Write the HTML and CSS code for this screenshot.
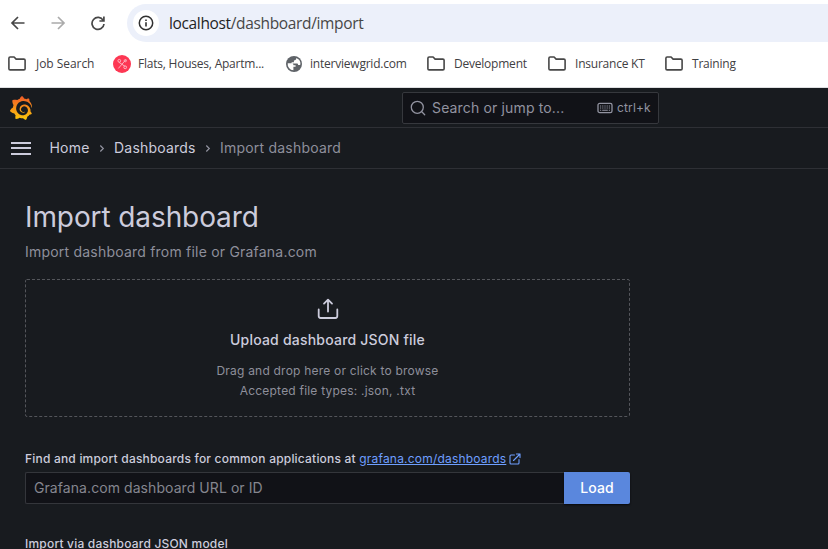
FILE: index.html
```html
<!DOCTYPE html>
<html lang="en">
<head>
<meta charset="utf-8">
<title>Import dashboard - Grafana</title>
<link rel="stylesheet" href="styles.css">
</head>
<body>
<svg class="defs" aria-hidden="true">
  <symbol id="folder" viewBox="0 0 20 16"><path d="M1.9 2.2Q1.9 1 3.1 1H7.1L9.1 3.1H16.9Q18.1 3.1 18.1 4.3V12.7Q18.1 13.9 16.9 13.9H3.1Q1.9 13.9 1.9 12.7Z" fill="none" stroke="#474747" stroke-width="1.6" stroke-linejoin="round"/></symbol>
</svg>
<header class="browser">
  <div class="toolbar">
    <svg class="nav" viewBox="0 0 16 16"><path d="M14.5 8H2M8 2L2 8l6 6" stroke="#474747"/></svg>
    <svg class="nav" viewBox="0 0 16 16"><path d="M1.5 8H14M8 2l6 6-6 6" stroke="#ababab"/></svg>
    <svg class="nav" viewBox="0 0 16 16"><path d="M13.2 5.4A6 6 0 1 0 14 9M13.9 1.6V6H9.4" stroke="#474747"/></svg>
    <div class="address">
      <span class="info"><svg width="16" height="16" viewBox="0 0 16 16"><circle cx="8" cy="8" r="6.7" fill="none" stroke="#303030" stroke-width="1.5"/><path d="M8 7.2v4.2M8 4.4v1.6" stroke="#303030" stroke-width="1.6"/></svg></span>
      <span class="url"><b>localhost</b>/dashboard/import</span>
    </div>
  </div>
  <nav class="bookmarks">
    <a class="bm job"><svg class="fold"><use href="#folder"/></svg><span>Job Search</span></a>
    <a class="bm flats"><svg width="18" height="18" viewBox="0 0 18 18"><circle cx="9" cy="9" r="9" fill="#fd3753"/><g fill="none" stroke="#ffb3bf" stroke-width="1"><path d="M12.9 4.6L5.4 13.4M5.8 7.2l6.6 4.4"/><circle cx="6.3" cy="5.8" r="1.4"/><circle cx="12.2" cy="12.3" r="1.4"/><circle cx="12.3" cy="5.7" r="1.1"/></g></svg><span>Flats, Houses, Apartm...</span></a>
    <a class="bm grid"><svg width="16" height="16" viewBox="0 0 16 16"><circle cx="8" cy="8" r="8" fill="#5f6368"/><path d="M1.7 7.2h3.4c1.6 0 2.4.9 2.4 2.1H9.6v1.5H7.4v3.5A6.3 6.3 0 0 1 1.7 7.2ZM10.3 1.9c.1 1.5-.8 2.4-2.4 2.5v1.8H5.6v1.3h5.2c1 0 1.3.7 1.3 1.6h2.1A6.3 6.3 0 0 0 10.3 1.9Z" fill="#fff"/></svg><span>interviewgrid.com</span></a>
    <a class="bm dev"><svg class="fold"><use href="#folder"/></svg><span>Development</span></a>
    <a class="bm ins"><svg class="fold"><use href="#folder"/></svg><span>Insurance KT</span></a>
    <a class="bm train"><svg class="fold"><use href="#folder"/></svg><span>Training</span></a>
  </nav>
</header>
<div class="topbar">
  <svg class="logo" viewBox="0 0 24 24"><defs><linearGradient id="lg" x1="0" y1="1" x2="0" y2="0"><stop offset="0" stop-color="#fcca0a"/><stop offset="1" stop-color="#f05a28"/></linearGradient></defs><path fill="url(#lg)" d="M23.02 10.59a8.578 8.578 0 0 0-.862-3.034 8.911 8.911 0 0 0-1.789-2.445c.337-1.342-.413-2.505-.413-2.505-1.292-.08-2.113.4-2.416.62-.052-.02-.102-.044-.154-.064-.22-.089-.446-.172-.677-.247-.231-.073-.47-.14-.711-.197a9.867 9.867 0 0 0-.875-.161C14.557.753 12.94 0 12.94 0c-1.804 1.145-2.147 2.744-2.147 2.744l-.018.093c-.098.029-.2.057-.298.088-.138.042-.275.094-.413.143-.138.055-.275.107-.41.166a8.869 8.869 0 0 0-1.557.87l-.063-.029c-2.497-.955-4.716.195-4.716.195-.203 2.658.996 4.33 1.235 4.636a11.608 11.608 0 0 0-.607 2.635C1.636 12.677.953 15.014.953 15.014c1.926 2.214 4.171 2.351 4.171 2.351.003-.002.006-.002.006-.005.285.509.615.994.986 1.446.156.19.32.371.488.548-.704 2.009.099 3.68.099 3.68 2.144.08 3.553-.937 3.849-1.173a9.784 9.784 0 0 0 3.164.501h.08l.055-.003.107-.002.103-.005.003.002c1.01 1.44 2.788 1.646 2.788 1.646 1.264-1.332 1.337-2.653 1.337-2.94v-.058c0-.02-.003-.039-.003-.06.265-.187.52-.387.758-.6a7.875 7.875 0 0 0 1.415-1.7c1.43.083 2.437-.885 2.437-.885-.236-1.49-1.085-2.216-1.264-2.354l-.018-.013-.016-.013a.217.217 0 0 1-.031-.02c.008-.092.016-.18.02-.27.011-.162.016-.323.016-.48v-.253l-.005-.098-.008-.135a1.891 1.891 0 0 0-.01-.13c-.003-.042-.008-.083-.013-.125l-.016-.124-.018-.122a6.215 6.215 0 0 0-2.032-3.73 6.015 6.015 0 0 0-3.222-1.46 6.292 6.292 0 0 0-.85-.048l-.107.002h-.063l-.044.003-.104.008a4.777 4.777 0 0 0-3.335 1.695c-.332.4-.592.84-.768 1.297a4.594 4.594 0 0 0-.312 1.817l.003.091c.005.055.007.11.013.164a3.615 3.615 0 0 0 .698 1.82 3.53 3.53 0 0 0 1.827 1.282c.33.098.66.14.971.137.039 0 .078 0 .114-.002l.063-.003c.02 0 .041-.003.062-.003.034-.002.065-.007.099-.01.007 0 .018-.003.028-.003l.031-.005.06-.008a1.18 1.18 0 0 0 .112-.02c.036-.008.072-.013.109-.024a2.634 2.634 0 0 0 .914-.415c.028-.02.056-.041.085-.065a.248.248 0 0 0 .039-.35.244.244 0 0 0-.309-.06l-.078.042c-.09.044-.184.083-.283.116a2.476 2.476 0 0 1-.475.096c-.028.003-.054.006-.083.006l-.083.002c-.026 0-.054 0-.08-.002l-.102-.006h-.012l-.024.006c-.016-.003-.031-.003-.044-.006-.031-.002-.06-.007-.091-.01a2.59 2.59 0 0 1-.724-.213 2.557 2.557 0 0 1-.667-.438 2.52 2.52 0 0 1-.805-1.475 2.306 2.306 0 0 1-.029-.444l.006-.122v-.023l.002-.031c.003-.021.003-.04.005-.06a3.163 3.163 0 0 1 1.352-2.29 3.12 3.12 0 0 1 .937-.43 2.946 2.946 0 0 1 .776-.101h.06l.07.002.045.003h.026l.07.005a4.041 4.041 0 0 1 1.635.49 3.94 3.94 0 0 1 1.602 1.662 3.77 3.77 0 0 1 .397 1.414l.005.076.003.075c.002.026.002.05.002.075 0 .024.003.052 0 .07v.065l-.002.073-.008.174a6.195 6.195 0 0 1-.08.639 5.1 5.1 0 0 1-.267.927 5.31 5.31 0 0 1-.624 1.13 5.052 5.052 0 0 1-3.237 2.014 4.82 4.82 0 0 1-.649.066l-.039.003h-.287a6.607 6.607 0 0 1-1.716-.265 6.776 6.776 0 0 1-3.4-2.274 6.75 6.75 0 0 1-.746-1.15 6.616 6.616 0 0 1-.714-2.596l-.005-.083-.002-.02v-.056l-.003-.073v-.096l-.003-.104v-.07l.003-.163c.008-.22.026-.45.054-.678a8.707 8.707 0 0 1 .28-1.355c.128-.444.286-.872.473-1.277a7.04 7.04 0 0 1 1.456-2.1 5.925 5.925 0 0 1 .953-.763c.169-.111.343-.213.524-.306.089-.05.182-.091.273-.135.047-.02.093-.042.138-.062a7.177 7.177 0 0 1 .714-.267l.145-.045c.049-.015.098-.026.148-.041.098-.029.197-.052.296-.076.049-.013.1-.02.15-.033l.15-.032.151-.028.076-.013.075-.01.153-.024c.057-.01.114-.013.171-.023l.169-.021c.036-.003.073-.008.106-.01l.073-.008.036-.003.042-.002c.057-.003.114-.008.171-.01l.086-.006h.023l.037-.003.145-.007a7.999 7.999 0 0 1 1.708.125 7.917 7.917 0 0 1 2.048.68 8.253 8.253 0 0 1 1.672 1.09l.09.077.089.078c.06.052.114.107.171.159.057.052.112.106.166.16.052.055.107.107.159.164a8.671 8.671 0 0 1 1.41 1.978c.012.026.028.052.04.078l.04.078.075.156c.023.051.05.1.07.153l.065.15a8.848 8.848 0 0 1 .45 1.34.19.19 0 0 0 .201.142.186.186 0 0 0 .172-.184c.01-.246.002-.532-.024-.856z"/></svg>
  <div class="search">
    <svg width="16" height="16" viewBox="0 0 16 16"><path d="M11.8 11.8L14.7 14.7M13.3 7.3a6 6 0 1 1-12 0a6 6 0 0 1 12 0Z" fill="none" stroke="#9293a0" stroke-width="1.3" stroke-linecap="round"/></svg>
    <span class="hint">Search or jump to...</span>
    <svg width="16" height="12" viewBox="0 0 16 12"><rect x="1" y="1.4" width="14" height="9.2" rx="1.7" fill="none" stroke="#9293a0" stroke-width="1.3"/><path d="M3 4h10M3 6h10" stroke="#9293a0" stroke-width="1.1" stroke-dasharray="1.2 1"/><path d="M3 8.3h1.2M5.2 8.3h5.6M11.8 8.3H13" stroke="#9293a0" stroke-width="1.1"/></svg>
    <span class="key">ctrl+k</span>
  </div>
</div>
<div class="crumbs">
  <svg class="menu" width="20" height="14" viewBox="0 0 20 14"><path d="M0 2h20M0 7h20M0 13h20" stroke="#ccccdc" stroke-width="2"/></svg>
  <a class="home">Home</a>
  <svg class="chev" viewBox="0 0 6 8"><path d="M1.3 1.5l3 3-3 3"/></svg>
  <a class="dash">Dashboards</a>
  <svg class="chev" viewBox="0 0 6 8"><path d="M1.3 1.5l3 3-3 3"/></svg>
  <span class="current">Import dashboard</span>
</div>
<main>
  <h1><span>Import dashboard</span></h1>
  <p class="sub">Import dashboard from file or Grafana.com</p>
  <section class="drop">
    <svg class="dash-border" width="605" height="138"><rect x=".5" y=".5" width="604" height="137" rx="1.5" fill="none" stroke="#54565b" stroke-dasharray="3 2"/></svg>
    <svg class="upload" width="22" height="22" viewBox="0 0 22 22"><path d="M1.7 11.5v6.6q0 1.9 1.9 1.9h14.8q1.9 0 1.9-1.9V11.5M11 13.5V2M7 5.6L11 1.6 15 5.6" fill="none" stroke="#ccccdc" stroke-width="1.8" stroke-linecap="round" stroke-linejoin="round"/></svg>
    <strong>Upload dashboard JSON file</strong>
    <small class="first">Drag and drop here or click to browse</small>
    <small>Accepted file types: .json, .txt</small>
  </section>
  <div class="label"><span>Find and import dashboards for common applications at&nbsp;</span><a>grafana.com/dashboards</a><svg width="12" height="12" viewBox="0 0 12 12"><path d="M5.5 2H2Q1 2 1 3v7q0 1 1 1h7q1 0 1-1V6.6M4.5 7.5L11 1M7.4 1H11v3.6" fill="none" stroke="#6e9fff" stroke-width="1.1" stroke-linecap="round" stroke-linejoin="round"/></svg></div>
  <div class="field"><div class="input">Grafana.com dashboard URL or ID</div><button>Load</button></div>
  <div class="label model"><span>Import via dashboard JSON model</span></div>
</main>
</body>
</html>
```
FILE: styles.css
```css
* { box-sizing: border-box; }
body { margin: 0; height: 549px; overflow: hidden; background: #181b1f; color: #ccccdc; font: 14px/22px Inter, "Liberation Sans", sans-serif; letter-spacing: .21px; }
svg { display: block; flex: none; }
span, a { white-space: nowrap; }
.defs { position: absolute; width: 0; height: 0; }
.browser { height: 88px; background: #fff; border-bottom: 1px solid #dedfe1; font-family: "Open Sans", "Noto Sans", sans-serif; letter-spacing: 0; }
.toolbar { height: 42px; padding: 4px 0 0 10px; display: flex; align-items: center; }
.nav { width: 16px; height: 16px; margin-right: 24px; fill: none; stroke-width: 1.7; }
.nav + .nav + .nav { margin-right: 21px; }
.address { flex: 1; height: 38px; display: flex; align-items: center; border-radius: 19px 0 0 19px; background: #ecf0fa; }
.info { width: 26px; height: 26px; margin-left: 6px; border-radius: 50%; background: #fff; display: grid; place-items: center; }
.url { margin-left: 10px; font-size: 15.5px; letter-spacing: -.35px; color: #474747; }
.url b { font-weight: 400; color: #1f1f1f; }
.bookmarks { display: flex; height: 44px; padding-left: 7px; font-size: 12px; letter-spacing: -.22px; color: #3f4043; }
.bm { display: flex; align-items: center; gap: 8px; }
.fold { width: 20px; height: 16px; }
.job { width: 106px; gap: 9px; letter-spacing: -.05px; }
.flats { width: 173px; gap: 7px; }
.grid { width: 140px; }
.dev { width: 121px; }
.ins { width: 117px; }
.topbar { height: 40px; border-bottom: 1px solid #2e3035; display: flex; align-items: center; padding-left: 9px; }
.logo { width: 24px; height: 24px; }
.search { margin-left: 369px; width: 257px; height: 32px; padding: 0 7px; display: flex; align-items: center; background: #111217; border: 1px solid #36383d; border-radius: 2px; color: #9293a0; letter-spacing: .15px; }
.hint { margin-left: 6px; width: 165px; }
.key { margin-left: 4px; font-size: 12px; }
.crumbs { height: 41px; border-bottom: 1px solid #2e3035; display: flex; align-items: center; padding-left: 11px; }
.menu { margin-right: 18.5px; }
.home { width: 49.5px; }
.chev { width: 6px; height: 8px; margin-right: 9px; fill: none; stroke: #9293a0; stroke-width: 1.2; }
.dash { width: 91px; }
.current, .sub { color: #8e8f9b; }
main { padding: 32px 0 0 25px; width: 630px; }
h1 { margin: 0; font-size: 28px; line-height: 32px; font-weight: 400; letter-spacing: -.1px; }
.sub { margin: 8px 0 16px; }
.drop { position: relative; height: 138px; display: flex; flex-direction: column; align-items: center; padding-top: 19px; }
.dash-border { position: absolute; inset: 0; }
strong { margin-top: 9px; font-weight: 500; }
small { font-size: 12px; line-height: 20px; color: #8e8f9b; }
.first { margin-top: 10px; }
.label { margin-top: 33px; height: 18px; display: flex; align-items: center; font-size: 12px; line-height: 18px; font-weight: 500; letter-spacing: .2px; }
.label a { color: #6e9fff; text-decoration: underline; font-weight: 400; margin-right: 3px; }
.field { display: flex; height: 32px; margin-top: 4px; }
.input { flex: 1; padding: 4px 8px; background: #111217; border: 1px solid #34363b; border-right: 0; border-radius: 2px 0 0 2px; color: #85868f; letter-spacing: .07px; }
button { width: 66px; padding: 0; border: 0; border-radius: 0 2px 2px 0; background: #5a87dd; color: #fff; font: 500 14px/32px Inter, sans-serif; letter-spacing: .15px; box-shadow: 0 1px 2px #08090c; }
.model { margin-top: 31px; }
```
